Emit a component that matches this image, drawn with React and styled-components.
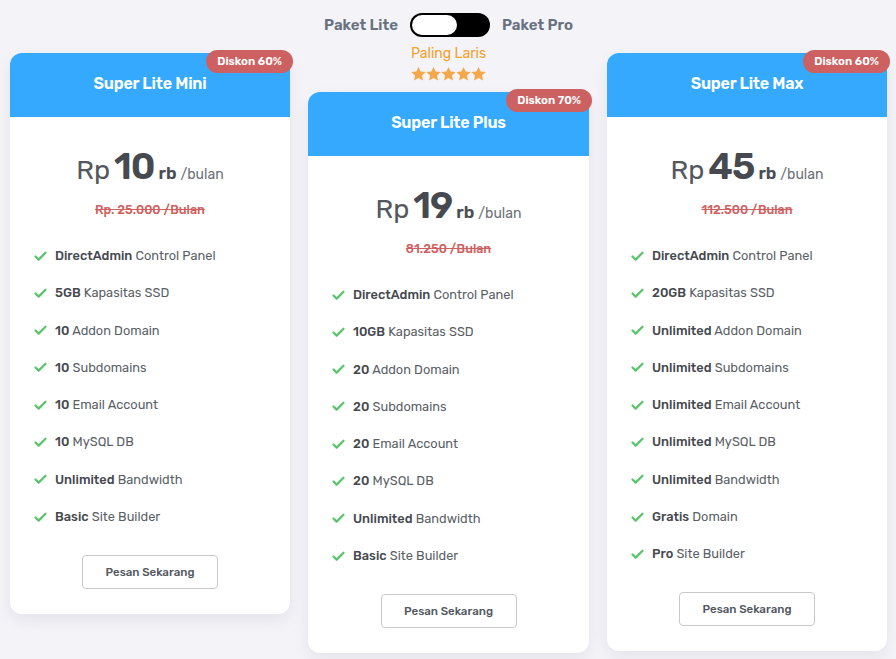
import React from "react";
import styled, { createGlobalStyle } from "styled-components";
import { Check } from "lucide-react";

const GlobalStyle = createGlobalStyle`
  html, body { margin: 0; padding: 0; background: #f3f3f8; }
  body { font-family: "Rubik", Inter, "Noto Sans", sans-serif; -webkit-font-smoothing: antialiased; }
  * { box-sizing: border-box; }
`;

const Page = styled.div`
  width: 896px;
  height: 659px;
  overflow: hidden;
  padding: 13px 9px 0 10px;
`;

const ToggleRow = styled.div`
  display: flex;
  align-items: center;
  justify-content: center;
  gap: 12px;
  height: 24px;
  margin-left: 0;
`;

const ToggleLabel = styled.span`
  font-size: 15px;
  font-weight: 600;
  color: #687180;
  line-height: 24px;
`;

const Switch = styled.div`
  width: 80px;
  height: 24px;
  border-radius: 12px;
  background: #000;
  padding: 2px;
  display: flex;
`;

const Knob = styled.div`
  width: 45px;
  height: 20px;
  border-radius: 10px;
  background: #fff;
`;

const Columns = styled.div`
  display: grid;
  grid-template-columns: 280px 281px 280px;
  column-gap: 18px;
  align-items: start;
  margin-top: 8px;
`;

const Column = styled.div`
  display: flex;
  flex-direction: column;
  align-items: center;
  padding-top: ${(p) => (p.$featured ? "0" : "8px")};
`;

const Popular = styled.div`
  font-size: 14px;
  line-height: 18px;
  color: #f5a22f;
  font-weight: 400;
`;

const Stars = styled.div`
  display: flex;
  margin-top: 3px;
  margin-bottom: 10px;
`;

const Card = styled.div`
  position: relative;
  width: 100%;
  background: #fff;
  border-radius: 12px;
  box-shadow: 0 6px 16px rgba(30, 30, 60, 0.07);
  padding-bottom: 25px;
  display: flex;
  flex-direction: column;
  align-items: center;
`;

const Header = styled.div`
  width: 100%;
  height: 64px;
  background: #34a9fd;
  border-radius: 12px 12px 0 0;
  display: flex;
  align-items: center;
  justify-content: center;
  padding-bottom: 4px;
  color: #fff;
  font-size: 16px;
  font-weight: 600;
  letter-spacing: -0.2px;
`;

const Badge = styled.div`
  position: absolute;
  top: -3px;
  right: -3px;
  height: 23px;
  padding: 0 11px;
  border-radius: 12px;
  background: #cd6161;
  color: #fff;
  font-size: 11.5px;
  font-weight: 600;
  line-height: 23px;
`;

const PriceRow = styled.div`
  margin-top: 25px;
  display: flex;
  align-items: baseline;
  gap: 4px;
  height: 48px;
  line-height: 48px;
  color: #4d5157;
`;

const Currency = styled.span`
  font-size: 27px;
  font-weight: 400;
  color: #54585e;
`;

const Amount = styled.span`
  font-size: 37px;
  font-weight: 600;
  letter-spacing: -1px;
  color: #464a50;
`;

const Unit = styled.span`
  font-size: 17px;
  font-weight: 600;
  color: #4a4e54;
`;

const Period = styled.span`
  font-size: 14px;
  color: #6d7178;
`;

const OldPrice = styled.div`
  margin-top: 12px;
  font-size: 12.5px;
  line-height: 16px;
  font-weight: 500;
  color: #d0605f;
  text-decoration: line-through;
`;

const Features = styled.ul`
  list-style: none;
  margin: 29px 0 0;
  padding: 0 0 0 23px;
  width: 100%;
  display: flex;
  flex-direction: column;
  gap: 19.3px;
`;

const Feature = styled.li`
  display: flex;
  align-items: center;
  gap: 7px;
  font-size: 12.8px;
  line-height: 18px;
  color: #5b5f66;
  b { font-weight: 500; color: #45494f; }
`;

const Button = styled.button`
  margin-top: 29px;
  width: 136px;
  height: 34px;
  background: #fff;
  border: 1px solid #c9c9c9;
  border-radius: 4px;
  font-family: inherit;
  font-size: 11.5px;
  font-weight: 500;
  color: #535861;
  cursor: pointer;
`;

const Star = () => (
  <svg width="15" height="16" viewBox="0 0 24 24">
    <path
      fill="#f3a94b"
      d="M12 0.6l3.5 7.3 8 1-5.9 5.6 1.5 7.9L12 18.5l-7.1 3.9 1.5-7.9L0.5 8.9l8-1z"
    />
  </svg>
);

const plans = [
  {
    name: "Super Lite Mini",
    badge: "Diskon 60%",
    amount: "10",
    old: "Rp. 25.000 /Bulan",
    features: [
      ["DirectAdmin", "Control Panel"],
      ["5GB", "Kapasitas SSD"],
      ["10", "Addon Domain"],
      ["10", "Subdomains"],
      ["10", "Email Account"],
      ["10", "MySQL DB"],
      ["Unlimited", "Bandwidth"],
      ["Basic", "Site Builder"],
    ],
  },
  {
    name: "Super Lite Plus",
    badge: "Diskon 70%",
    amount: "19",
    old: "81.250 /Bulan",
    featured: true,
    features: [
      ["DirectAdmin", "Control Panel"],
      ["10GB", "Kapasitas SSD"],
      ["20", "Addon Domain"],
      ["20", "Subdomains"],
      ["20", "Email Account"],
      ["20", "MySQL DB"],
      ["Unlimited", "Bandwidth"],
      ["Basic", "Site Builder"],
    ],
  },
  {
    name: "Super Lite Max",
    badge: "Diskon 60%",
    amount: "45",
    old: "112.500 /Bulan",
    features: [
      ["DirectAdmin", "Control Panel"],
      ["20GB", "Kapasitas SSD"],
      ["Unlimited", "Addon Domain"],
      ["Unlimited", "Subdomains"],
      ["Unlimited", "Email Account"],
      ["Unlimited", "MySQL DB"],
      ["Unlimited", "Bandwidth"],
      ["Gratis", "Domain"],
      ["Pro", "Site Builder"],
    ],
  },
];

export default function App() {
  return (
    <>
      <GlobalStyle />
      <Page>
        <ToggleRow>
          <ToggleLabel>Paket Lite</ToggleLabel>
          <Switch>
            <Knob />
          </Switch>
          <ToggleLabel>Paket Pro</ToggleLabel>
        </ToggleRow>
        <Columns>
          {plans.map((p) => (
            <Column key={p.name} $featured={p.featured}>
              {p.featured && (
                <>
                  <Popular>Paling Laris</Popular>
                  <Stars>
                    <Star />
                    <Star />
                    <Star />
                    <Star />
                    <Star />
                  </Stars>
                </>
              )}
              <Card>
                <Badge>{p.badge}</Badge>
                <Header>{p.name}</Header>
                <PriceRow>
                  <Currency>Rp</Currency>
                  <Amount>{p.amount}</Amount>
                  <Unit>rb</Unit>
                  <Period>/bulan</Period>
                </PriceRow>
                <OldPrice>{p.old}</OldPrice>
                <Features>
                  {p.features.map(([b, t], i) => (
                    <Feature key={i}>
                      <Check size={15} strokeWidth={3.6} color="#5ac46c" />
                      <span>
                        <b>{b}</b> {t}
                      </span>
                    </Feature>
                  ))}
                </Features>
                <Button>Pesan Sekarang</Button>
              </Card>
            </Column>
          ))}
        </Columns>
      </Page>
    </>
  );
}
